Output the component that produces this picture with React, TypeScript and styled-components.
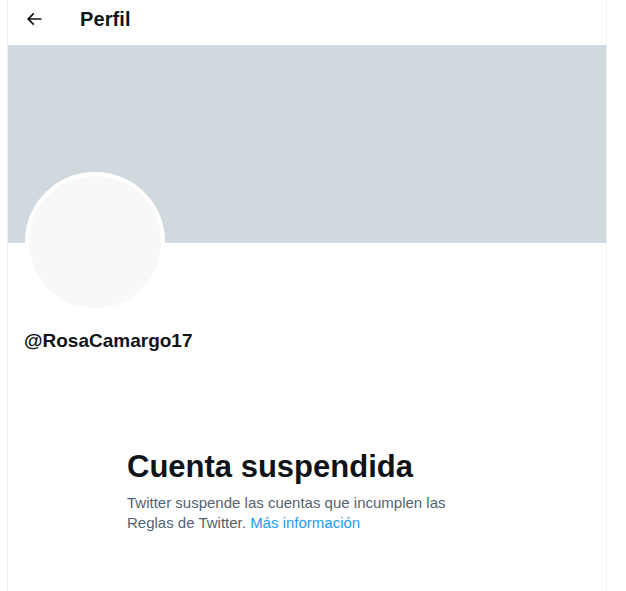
import React from "react";
import styled, { createGlobalStyle } from "styled-components";

const Global = createGlobalStyle`
  html, body { margin: 0; padding: 0; background: #ffffff; }
  body { font-family: "Liberation Sans", Arial, sans-serif; color: #0f1419; }
  * { box-sizing: border-box; }
`;

const Page = styled.div`
  display: flex;
  min-height: 591px;
  padding-left: 7px;
`;

const Column = styled.main`
  width: 600px;
  min-height: 591px;
  border-left: 1px solid #eff3f4;
  border-right: 1px solid #eff3f4;
  display: flex;
  flex-direction: column;
`;

const Header = styled.header`
  height: 45px;
  display: flex;
  align-items: center;
  padding: 0 0 7px 8px;
`;

const BackButton = styled.button`
  width: 36px;
  height: 36px;
  margin-right: 28px;
  border: none;
  background: transparent;
  border-radius: 50%;
  display: flex;
  align-items: center;
  justify-content: center;
  padding: 0;
  color: #0f1419;
`;

const Title = styled.h2`
  margin: 0;
  font-size: 20px;
  font-weight: 700;
  line-height: 24px;
  letter-spacing: 0.1px;
`;

const Banner = styled.div`
  height: 198px;
  background: #cfd9de;
`;

const ProfileInfo = styled.div`
  padding: 0 16px 0 17px;
  display: flex;
  flex-direction: column;
`;

const Avatar = styled.div`
  width: 140px;
  height: 140px;
  margin-top: -71px;
  border-radius: 50%;
  border: 4px solid #ffffff;
  background: #f7f9f9;
`;

const Handle = styled.div`
  margin-top: 17px;
  margin-left: -1px;
  font-size: 19px;
  font-weight: 700;
  line-height: 24px;
`;

const Notice = styled.section`
  padding: 96px 0 0 119px;
  display: flex;
  flex-direction: column;
`;

const NoticeTitle = styled.h1`
  margin: 0;
  font-size: 31px;
  font-weight: 700;
  line-height: 36px;
`;

const NoticeText = styled.p`
  margin: 8px 0 0;
  width: 340px;
  font-size: 15px;
  line-height: 20px;
  color: #536471;
`;

const Link = styled.a`
  color: #1d9bf0;
  text-decoration: none;
`;

export default function App() {
  return (
    <>
      <Global />
      <Page>
        <Column>
          <Header>
            <BackButton aria-label="Atrás">
              <svg width="20" height="20" viewBox="0 0 24 24" fill="currentColor">
                <path d="M7.414 13l5.043 5.04-1.414 1.42L3.586 12l7.457-7.46 1.414 1.42L7.414 11H21v2H7.414z" />
              </svg>
            </BackButton>
            <Title>Perfil</Title>
          </Header>
          <Banner />
          <ProfileInfo>
            <Avatar />
            <Handle>@RosaCamargo17</Handle>
          </ProfileInfo>
          <Notice>
            <NoticeTitle>Cuenta suspendida</NoticeTitle>
            <NoticeText>
              Twitter suspende las cuentas que incumplen las Reglas de Twitter.{" "}
              <Link href="#">Más información</Link>
            </NoticeText>
          </Notice>
        </Column>
      </Page>
    </>
  );
}
